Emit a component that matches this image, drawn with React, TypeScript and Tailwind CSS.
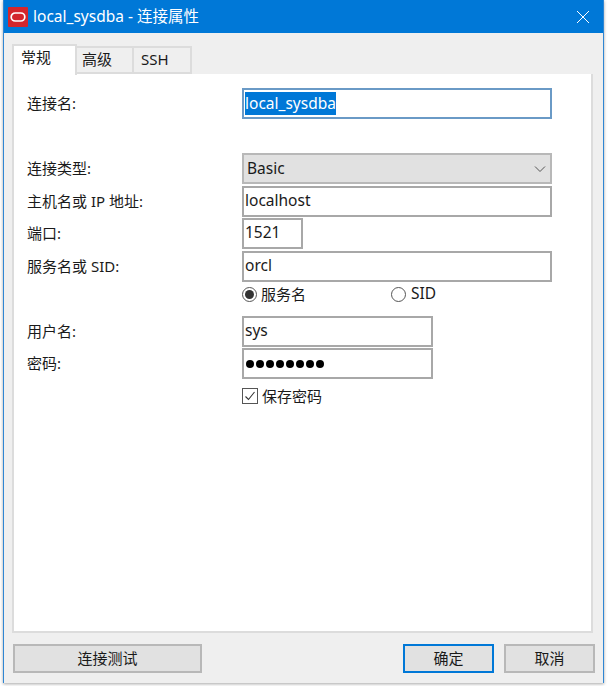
import React from "react";

const font = "font-['Noto_Sans','Noto_Sans_CJK_SC',sans-serif]";

function Row({ label, className, children }: { label?: string; className?: string; children: React.ReactNode }) {
  return (
    <div className={`flex items-center ${className ?? ""}`}>
      <div className="w-[215px] shrink-0 text-[15px] text-[#1a1a1a]">{label}</div>
      {children}
    </div>
  );
}

function Field({ value, width }: { value: string; width: string }) {
  return (
    <div className={`flex h-[31px] items-center border-2 border-[#a8a8a8] bg-white pb-[2px] pl-[1px] text-[15.5px] text-[#1a1a1a] ${width}`}>
      {value}
    </div>
  );
}

function Button({ label, className }: { label: string; className: string }) {
  return (
    <button className={`flex h-[29px] items-center justify-center border-2 bg-[#e1e1e1] text-[15px] text-[#1a1a1a] ${className}`}>
      {label}
    </button>
  );
}

export default function App() {
  return (
    <div className={`h-[686px] w-[608px] overflow-hidden bg-white pr-[4px] pb-[3px] pl-[3px] ${font}`}>
      <div className="flex h-[683px] flex-col border-x border-[#2f86d3] bg-[#efefef] shadow-[0_1px_3px_rgba(0,0,0,0.35)]">
        {/* title bar */}
        <div className="flex h-[33px] shrink-0 items-center bg-[#0078d7] pl-[4px] pr-[13px] text-white">
          <svg width="20" height="20" viewBox="0 0 20 20" className="shrink-0">
            <rect width="20" height="20" rx="1" fill="#d3262c" />
            <rect x="3.2" y="6" width="13.6" height="8" rx="4" fill="none" stroke="#fff" strokeWidth="1.7" />
          </svg>
          <span className="ml-[5px] text-[15.5px]">local_sysdba - 连接属性</span>
          <svg width="14" height="14" viewBox="0 0 14 14" className="ml-auto">
            <path d="M1 1l12 12M13 1L1 13" stroke="#fff" strokeWidth="1" fill="none" />
          </svg>
        </div>

        {/* tabs */}
        <div className="mt-[10px] flex h-[31px] items-end pl-[8px] text-[15px] text-[#1a1a1a]">
          <div className="z-10 -mb-[1px] h-[31px] w-[65px] border-x-2 border-t-2 border-[#dcdcdc] bg-white pl-[7px]">常规</div>
          <div className="h-[28px] w-[57px] border-y-2 border-r-2 border-[#dcdcdc] pl-[5px]">高级</div>
          <div className="h-[28px] w-[58px] border-y-2 border-r-2 border-[#dcdcdc] pl-[7px]">SSH</div>
        </div>

        {/* panel */}
        <div className="ml-[8px] mr-[10px] flex h-[559px] flex-col border-2 border-t-0 border-[#dcdcdc] bg-white pl-[13px] pt-[14px]">
          <Row label="连接名:">
            <div className="flex h-[31px] w-[310px] items-center border-2 border-[#6a9ac6] pl-[1px] text-[15.5px]">
              <span className="bg-[#0078d7] leading-[23px] text-white">local_sysdba</span>
            </div>
          </Row>

          <Row label="连接类型:" className="mt-[34px]">
            <div className="flex h-[31px] w-[310px] items-center justify-between border-2 border-[#b8b8b8] bg-[#e1e1e1] pl-[3px] pr-[3px] text-[15.5px] text-[#1a1a1a]">
              Basic
              <svg width="14" height="14" viewBox="0 0 14 14">
                <path d="M2 4.5l5 5 5-5" stroke="#555" strokeWidth="1" fill="none" />
              </svg>
            </div>
          </Row>
          <Row label="主机名或 IP 地址:" className="mt-[2px]">
            <Field value="localhost" width="w-[310px]" />
          </Row>
          <Row label="端口:" className="mt-[1px]">
            <Field value="1521" width="w-[61px]" />
          </Row>
          <Row label="服务名或 SID:" className="mt-[2px]">
            <Field value="orcl" width="w-[310px]" />
          </Row>

          <div className="flex h-[24px] items-center pl-[215px] text-[15px] text-[#1a1a1a]">
            <div className="flex w-[149px] items-center">
              <span className="flex h-[15px] w-[15px] items-center justify-center rounded-full border border-[#555]">
                <span className="h-[9px] w-[9px] rounded-full bg-[#333]" />
              </span>
              <span className="ml-[4px]">服务名</span>
            </div>
            <span className="h-[15px] w-[15px] rounded-full border border-[#555]" />
            <span className="ml-[5px] text-[15.5px]">SID</span>
          </div>

          <Row label="用户名:" className="mt-[10px]">
            <Field value="sys" width="w-[191px]" />
          </Row>
          <Row label="密码:" className="mt-[1px]">
            <div className="flex h-[31px] w-[191px] items-center border-2 border-[#a8a8a8] pl-[2px]">
              <div className="flex gap-[2px]">
                {[0, 1, 2, 3, 4, 5, 6, 7].map((i) => (
                  <span key={i} className="h-[8px] w-[8px] rounded-full bg-black" />
                ))}
              </div>
            </div>
          </Row>

          <div className="mt-[9px] flex h-[16px] items-center pl-[215px] text-[15px] text-[#1a1a1a]">
            <span className="flex h-[16px] w-[16px] items-center justify-center border border-[#555]">
              <svg width="12" height="12" viewBox="0 0 12 12">
                <path d="M1.5 6.5l3 3 6-7.5" stroke="#333" strokeWidth="1.1" fill="none" />
              </svg>
            </span>
            <span className="ml-[4px]">保存密码</span>
          </div>
        </div>

        {/* footer buttons */}
        <div className="mt-[11px] flex pl-[9px] pr-[8px]">
          <Button label="连接测试" className="w-[189px] border-[#b8b8b8]" />
          <Button label="确定" className="ml-auto w-[91px] border-[#0078d7]" />
          <Button label="取消" className="ml-[10px] w-[91px] border-[#b8b8b8]" />
        </div>
      </div>
    </div>
  );
}
